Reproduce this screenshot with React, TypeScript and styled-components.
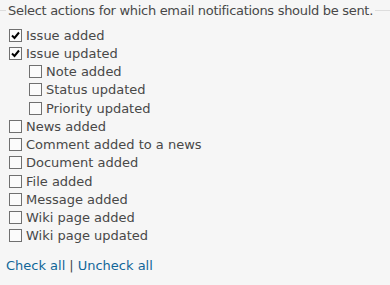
import React, { useState } from "react"
import styled, { createGlobalStyle } from "styled-components"

const GlobalStyle = createGlobalStyle`
  html, body {
    margin: 0;
    padding: 0;
    background: #f6f6f6;
  }
  body {
    font-family: Verdana, "DejaVu Sans", sans-serif;
    font-size: 12px;
    color: #484848;
  }
`

type Item = {
  key: string
  label: string
  nested?: boolean
}

const items: Item[] = [
  { key: "issue_added", label: "Issue added" },
  { key: "issue_updated", label: "Issue updated" },
  { key: "issue_note_added", label: "Note added", nested: true },
  { key: "issue_status_updated", label: "Status updated", nested: true },
  { key: "issue_priority_updated", label: "Priority updated", nested: true },
  { key: "news_added", label: "News added" },
  { key: "news_comment_added", label: "Comment added to a news" },
  { key: "document_added", label: "Document added" },
  { key: "file_added", label: "File added" },
  { key: "message_posted", label: "Message added" },
  { key: "wiki_content_added", label: "Wiki page added" },
  { key: "wiki_content_updated", label: "Wiki page updated" },
]

export default function App() {
  const [checked, setChecked] = useState<Record<string, boolean>>({
    issue_added: true,
    issue_updated: true,
  })

  const toggle = (key: string) => setChecked({ ...checked, [key]: !checked[key] })

  // check / uncheck every action at once
  const setAll = (value: boolean) => {
    const next: Record<string, boolean> = {}
    items.forEach((i) => (next[i.key] = value))
    setChecked(next)
  }

  return (
    <>
      <GlobalStyle />
      <S.Fieldset>
        <S.Legend>Select actions for which email notifications should be sent.</S.Legend>
        {items.map((i) => (
          <S.Row key={i.key} $nested={i.nested} onClick={() => toggle(i.key)}>
            <S.Box>
              {checked[i.key] && (
                <svg width="9" height="9" viewBox="0 0 9 9">
                  <path d="M1 4.5 L3.5 7 L8 1.5" fill="none" stroke="#000" strokeWidth="2" />
                </svg>
              )}
            </S.Box>
            {i.label}
          </S.Row>
        ))}
      </S.Fieldset>
      <S.Actions>
        <S.Link href="#" onClick={(e) => { e.preventDefault(); setAll(true) }}>Check all</S.Link>
        <S.Sep>|</S.Sep>
        <S.Link href="#" onClick={(e) => { e.preventDefault(); setAll(false) }}>Uncheck all</S.Link>
      </S.Actions>
    </>
  )
}

const S = {
  Fieldset: styled.fieldset`
    margin: 4px 0 0;
    padding: 9px 0 0 6px;
    border: none;
    border-top: 1px solid #dddddd;
    min-width: 0;
  `,
  Legend: styled.legend`
    padding: 0 2px;
    font-size: 13px;
    line-height: 13px;
    letter-spacing: -0.3px;
    white-space: nowrap;
  `,
  Row: styled.label<{ $nested?: boolean }>`
    display: flex;
    align-items: center;
    height: 18.25px;
    padding-left: ${(p) => (p.$nested ? "23px" : "3px")};
    font-size: 13px;
    cursor: pointer;
  `,
  Box: styled.span`
    display: flex;
    align-items: center;
    justify-content: center;
    box-sizing: border-box;
    width: 13px;
    height: 13px;
    margin-right: 4px;
    border: 1px solid #707070;
    background: #fbfbfb;
  `,
  Actions: styled.p`
    margin: 13px 0 0 6px;
    font-size: 13px;
  `,
  Link: styled.a`
    color: #116699;
    text-decoration: none;
  `,
  Sep: styled.span`
    margin: 0 4px;
    color: #484848;
  `,
}
